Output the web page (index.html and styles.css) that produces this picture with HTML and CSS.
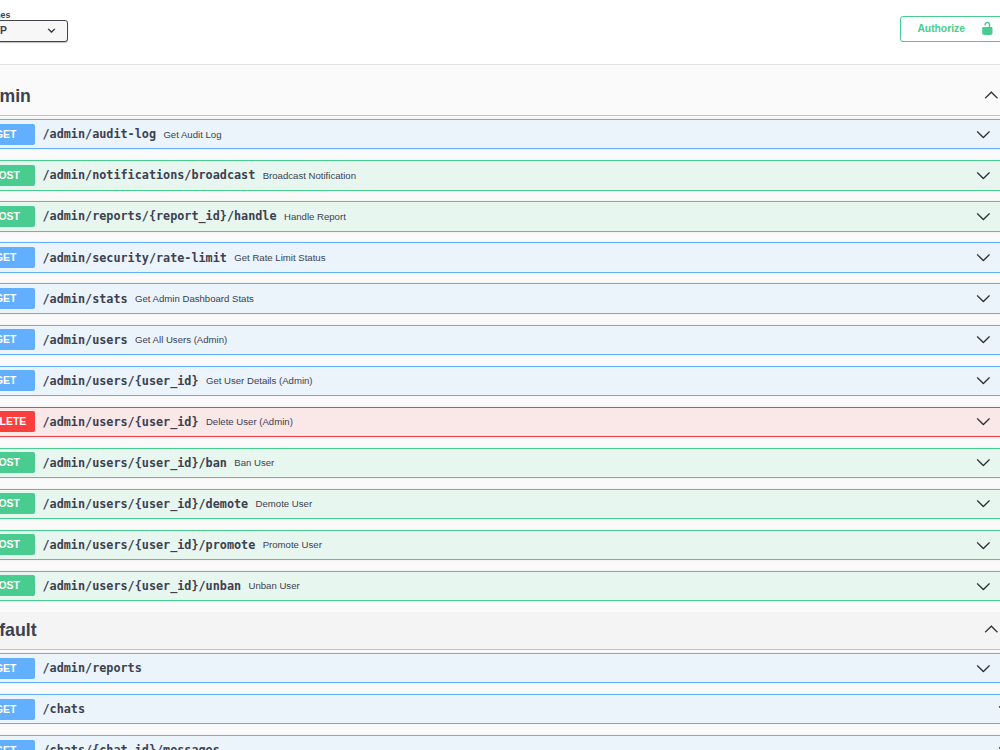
FILE: index.html
```html
<!DOCTYPE html>
<html lang="en">
<head>
  <meta charset="UTF-8" />
  <meta name="viewport" content="width=device-width, initial-scale=1.0" />
  <title>API Docs</title>
  <link rel="stylesheet" href="styles.css">
</head>
<body>
  <svg class="defs">
    <symbol id="arrow" viewBox="0 0 20 20">
      <path d="M17.418 6.109c.272-.268.709-.268.979 0s.271.701 0 .969l-7.908 7.83c-.27.268-.707.268-.979 0l-7.908-7.83c-.27-.268-.27-.701 0-.969.271-.268.709-.268.979 0L10 13.25l7.418-7.141z"/>
    </symbol>
  </svg>

  <div class="swagger-ui">
    <div class="scheme-container">
      <div class="schemes">
        <span class="schemes-title">Schemes</span>
        <div class="select">
          <span>HTTP</span>
          <svg class="select-arrow" viewBox="0 0 20 20"><path d="M13.418 7.859a.695.695 0 0 1 .978 0 .68.68 0 0 1 0 .969l-3.908 3.83a.697.697 0 0 1-.979 0l-3.908-3.83a.68.68 0 0 1 0-.969.695.695 0 0 1 .978 0L10 11l3.418-3.141z"/></svg>
        </div>
      </div>
      <button class="authorize">
        <span>Authorize</span>
        <svg viewBox="0 0 20 20"><path d="M15.8 8H14V5.6C14 2.703 12.665 1 10 1 7.334 1 6 2.703 6 5.6V6h2v-.801C8 3.754 8.797 3 10 3c1.203 0 2 .754 2 2.199V8H4c-.553 0-1 .646-1 1.199V17c0 .549.428 1.139.951 1.307l1.197.387C5.672 18.861 6.55 19 7.1 19h5.8c.549 0 1.428-.139 1.951-.307l1.196-.387c.524-.167.953-.757.953-1.306V9.199C17 8.646 16.352 8 15.8 8z"/></svg>
      </button>
    </div>

    <div class="tag-section first">
      <h3 class="tag"><span>Admin</span><svg class="arrow up"><use href="#arrow"/></svg></h3>
      <div class="opblock get"><span class="method">GET</span><span class="path">/admin/audit-log</span><span class="summary">Get Audit Log</span><svg class="arrow"><use href="#arrow"/></svg></div>
      <div class="opblock post"><span class="method">POST</span><span class="path">/admin/notifications/broadcast</span><span class="summary">Broadcast Notification</span><svg class="arrow"><use href="#arrow"/></svg></div>
      <div class="opblock post"><span class="method">POST</span><span class="path">/admin/reports/{report_id}/handle</span><span class="summary">Handle Report</span><svg class="arrow"><use href="#arrow"/></svg></div>
      <div class="opblock get"><span class="method">GET</span><span class="path">/admin/security/rate-limit</span><span class="summary">Get Rate Limit Status</span><svg class="arrow"><use href="#arrow"/></svg></div>
      <div class="opblock get"><span class="method">GET</span><span class="path">/admin/stats</span><span class="summary">Get Admin Dashboard Stats</span><svg class="arrow"><use href="#arrow"/></svg></div>
      <div class="opblock get"><span class="method">GET</span><span class="path">/admin/users</span><span class="summary">Get All Users (Admin)</span><svg class="arrow"><use href="#arrow"/></svg></div>
      <div class="opblock get"><span class="method">GET</span><span class="path">/admin/users/{user_id}</span><span class="summary">Get User Details (Admin)</span><svg class="arrow"><use href="#arrow"/></svg></div>
      <div class="opblock delete"><span class="method">DELETE</span><span class="path">/admin/users/{user_id}</span><span class="summary">Delete User (Admin)</span><svg class="arrow"><use href="#arrow"/></svg></div>
      <div class="opblock post"><span class="method">POST</span><span class="path">/admin/users/{user_id}/ban</span><span class="summary">Ban User</span><svg class="arrow"><use href="#arrow"/></svg></div>
      <div class="opblock post"><span class="method">POST</span><span class="path">/admin/users/{user_id}/demote</span><span class="summary">Demote User</span><svg class="arrow"><use href="#arrow"/></svg></div>
      <div class="opblock post"><span class="method">POST</span><span class="path">/admin/users/{user_id}/promote</span><span class="summary">Promote User</span><svg class="arrow"><use href="#arrow"/></svg></div>
      <div class="opblock post"><span class="method">POST</span><span class="path">/admin/users/{user_id}/unban</span><span class="summary">Unban User</span><svg class="arrow"><use href="#arrow"/></svg></div>
    </div>

    <div class="tag-section">
      <h3 class="tag hovered"><span>Default</span><svg class="arrow up"><use href="#arrow"/></svg></h3>
      <div class="opblock get"><span class="method">GET</span><span class="path">/admin/reports</span><svg class="arrow"><use href="#arrow"/></svg></div>
      <div class="opblock get no-auth"><span class="method">GET</span><span class="path">/chats</span><svg class="arrow"><use href="#arrow"/></svg></div>
      <div class="opblock get no-auth"><span class="method">GET</span><span class="path">/chats/{chat_id}/messages</span><svg class="arrow"><use href="#arrow"/></svg></div>
    </div>
  </div>
</body>
</html>
```

FILE: styles.css
```css
* {
  box-sizing: border-box;
}

body {
  margin: 0;
  height: 750px;
  overflow: hidden;
  background: #fafafa;
  color: #3b4151;
  font-family: "Liberation Sans", Arial, sans-serif;
}

.defs {
  display: none;
}

.swagger-ui {
  width: 1056px;
  margin-left: -28.4px;
}

.scheme-container {
  display: flex;
  justify-content: space-between;
  align-items: flex-start;
  height: 65px;
  padding: 9.6px 18.4px 0 0;
  background: #fff;
  border-bottom: 1px solid #e2e2e2;
}

.schemes {
  display: flex;
  flex-direction: column;
  width: 96.4px;
}

.schemes-title {
  font-size: 8.82px;
  font-weight: bold;
  line-height: 10px;
}

.select {
  display: flex;
  justify-content: space-between;
  align-items: center;
  height: 22px;
  padding: 0 11px 1px 7.5px;
  border: 1px solid #41444e;
  border-radius: 3px;
  background: #f7f7f7;
  box-shadow: 0 1px 1px rgba(0, 0, 0, 0.25);
  font-size: 10.3px;
  font-weight: bold;
}

.select-arrow {
  width: 15px;
  height: 15px;
  margin-right: -3px;
  fill: #25282f;
  stroke: #25282f;
  stroke-width: 0.5;
}

.authorize {
  display: flex;
  align-items: center;
  justify-content: space-between;
  width: 109.4px;
  height: 26px;
  margin-top: 6px;
  padding: 0 13.2px 1px 16.6px;
  border: 1px solid #49cc90;
  border-radius: 3px;
  background: transparent;
  color: #49cc90;
  font-family: inherit;
  font-size: 10.3px;
  font-weight: bold;
}

.authorize svg {
  width: 14.7px;
  height: 14.7px;
  fill: #49cc90;
}

.tag {
  display: flex;
  align-items: center;
  justify-content: space-between;
  height: 38.6px;
  margin: 0 0 2.8px;
  padding: 0 28.6px 0 4.8px;
  border-bottom: 1px solid #c0c1c4;
  font-size: 17.8px;
}

.first .tag {
  height: 39px;
  margin: 11.6px 0 3.7px;
  padding-top: 1px;
  padding-left: 4.4px;
  font-size: 17.64px;
}

.first .tag .arrow {
  margin-bottom: 2px;
}

.tag.hovered {
  background: #f4f4f4;
}

.tag.hovered .arrow {
  margin-bottom: 2px;
}

.opblock {
  display: flex;
  align-items: center;
  height: 30.2px;
  margin-bottom: 10.87px;
  padding: 0 35.6px 0 3.7px;
  border: 1px solid;
  border-radius: 3px;
  box-shadow: 0 0 2px rgba(0, 0, 0, 0.1);
}

.opblock.no-auth {
  padding-right: 14.4px;
}

.method {
  width: 58.8px;
  height: 21px;
  border-radius: 2px;
  color: #fff;
  font-size: 10.4px;
  font-weight: bold;
  line-height: 21px;
  text-align: center;
}

.path {
  padding: 0 7.4px;
  font-family: "DejaVu Sans Mono", monospace;
  font-size: 11.79px;
  font-weight: bold;
}

.summary {
  font-size: 9.6px;
}

.arrow {
  width: 14.7px;
  height: 14.7px;
  margin-left: auto;
  fill: #25282f;
  stroke: #25282f;
  stroke-width: 0.4;
}

.arrow.up {
  transform: rotate(180deg);
}

.get {
  border-color: #61affe;
  background: #ebf3fb;
}

.get .method {
  background: #61affe;
}

.post {
  border-color: #49cc90;
  background: #e8f6f0;
}

.post .method {
  background: #49cc90;
}

.delete {
  border-color: #f93e3e;
  background: #fae7e7;
}

.delete .method {
  background: #f93e3e;
}
```
